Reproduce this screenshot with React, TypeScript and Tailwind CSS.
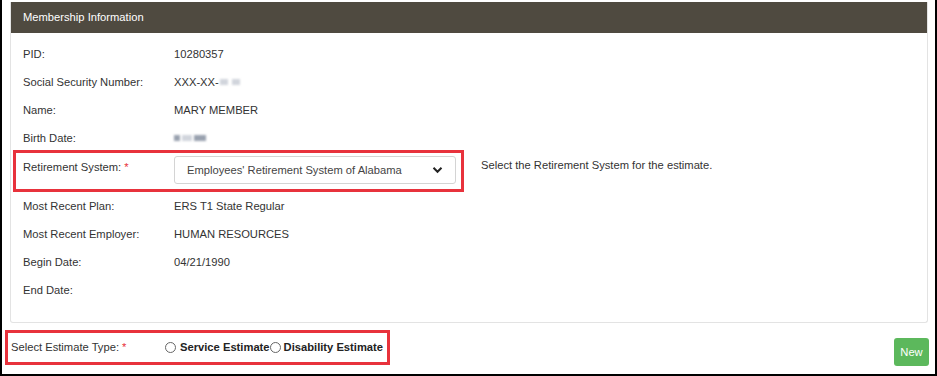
import React from 'react';

const rows: { label: string; value: React.ReactNode }[] = [
    { label: 'PID:', value: '10280357' },
    {
        label: 'Social Security Number:',
        value: (
            <span className="flex items-center">
                XXX-XX-
                <span className="ml-[1px] inline-block h-[6px] w-[8px] bg-gray-300 blur-[1px]" />
                <span className="ml-[4px] inline-block h-[6px] w-[8px] bg-gray-300 blur-[1px]" />
            </span>
        ),
    },
    { label: 'Name:', value: 'MARY MEMBER' },
    {
        label: 'Birth Date:',
        value: (
            <span className="flex items-center gap-[2px]">
                <span className="inline-block h-[6px] w-[6px] bg-gray-400 blur-[1px]" />
                <span className="inline-block h-[6px] w-[10px] bg-gray-300 blur-[1px]" />
                <span className="inline-block h-[6px] w-[12px] bg-gray-400 blur-[1px]" />
            </span>
        ),
    },
];

const rowsAfter: { label: string; value: string }[] = [
    { label: 'Most Recent Plan:', value: 'ERS T1 State Regular' },
    { label: 'Most Recent Employer:', value: 'HUMAN RESOURCES' },
    { label: 'Begin Date:', value: '04/21/1990' },
    { label: 'End Date:', value: '' },
];

function InfoRow({ label, value }: { label: string; value: React.ReactNode }) {
    return (
        <div className="flex h-[28px] items-center pl-[12px]">
            <div className="w-[151px]">{label}</div>
            <div>{value}</div>
        </div>
    );
}

export default function App(): React.ReactElement {
    return (
        <div
            className="relative h-[376px] w-[937px] overflow-hidden border-x-2 border-b-2 border-black bg-white text-[11.2px] text-[#333]"
            style={{ fontFamily: '"Liberation Sans", Arial, sans-serif' }}
        >
            {/* panel */}
            <div className="ml-[8px] mt-[2px] w-[918px] rounded-b-[3px] border border-t-0 border-[#e3e3e3]">
                <div className="flex h-[31px] items-center bg-[#4f4a40] pl-[12px] text-white">Membership Information</div>
                <div className="pb-[18px] pt-[7px]">
                    {rows.map((r) => (
                        <InfoRow key={r.label} label={r.label} value={r.value} />
                    ))}

                    <div className="-mt-[2px] flex items-center">
                        <div className="ml-[2px] flex h-[42px] w-[451px] border-[3px] border-[#e8323c] pl-[7px]">
                            <div className="w-[151px] pt-[6px]">
                                Retirement System: <span className="text-[#e8323c]">*</span>
                            </div>
                            <div className="mt-[3px] flex h-[28px] w-[282px] items-center justify-between rounded-[3px] border border-[#d4d4d4] pl-[12px] pr-[12px] text-[#444]">
                                <span>Employees' Retirement System of Alabama</span>
                                <svg width="11" height="8" viewBox="0 0 11 8" fill="none">
                                    <path d="M1.5 1.8 L5.5 5.8 L9.5 1.8" stroke="#222" strokeWidth="2" />
                                </svg>
                            </div>
                        </div>
                        <div className="ml-[17px] -mt-[12px]">Select the Retirement System for the estimate.</div>
                    </div>

                    {rowsAfter.map((r) => (
                        <InfoRow key={r.label} label={r.label} value={r.value} />
                    ))}
                </div>
            </div>

            {/* estimate type */}
            <div className="mt-[7px] flex items-start justify-between pr-[6px]">
                <div className="ml-[3px] flex h-[35px] w-[385px] items-center border-[3px] border-[#e8323c] pl-[3px]">
                    <div className="w-[154px]">
                        Select Estimate Type: <span className="text-[#e8323c]">*</span>
                    </div>
                    <label className="flex items-center font-bold text-[#222]">
                        <span className="mr-[4px] inline-block h-[11px] w-[11px] rounded-full border border-[#666] bg-white" />
                        Service Estimate
                    </label>
                    <label className="flex items-center font-bold text-[#222]">
                        <span className="mr-[3px] inline-block h-[11px] w-[11px] rounded-full border border-[#666] bg-white" />
                        Disability Estimate
                    </label>
                </div>
                <button className="mt-[8px] flex h-[28px] w-[35px] items-center justify-center rounded-[3px] bg-[#5cb85c] text-white">
                    New
                </button>
            </div>
        </div>
    );
}
